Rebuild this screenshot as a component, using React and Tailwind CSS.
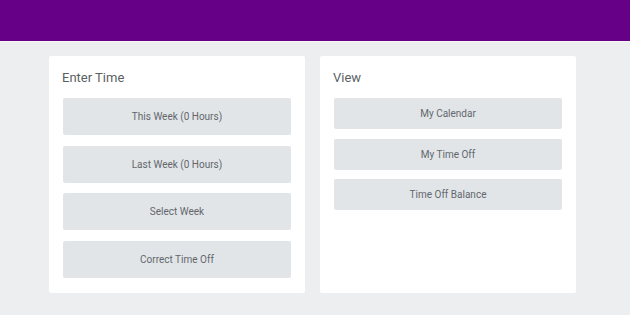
const enterTime = ['This Week (0 Hours)', 'Last Week (0 Hours)', 'Select Week', 'Correct Time Off'];
const view = ['My Calendar', 'My Time Off', 'Time Off Balance'];

function Card({ title, items, tall }) {
    return (
        <div className="w-[256px] h-[237px] bg-white rounded-[2px] px-[14px] pt-[13px]">
            <h2 className="text-[13px] leading-[17px] text-[#5b5f64] mb-[12px] -ml-px">{title}</h2>
            <div className={tall ? 'flex flex-col gap-[10.5px]' : 'flex flex-col gap-[9.5px]'}>
                {items.map((item) => (
                    <button
                        key={item}
                        className={`w-full ${tall ? 'h-[37px]' : 'h-[31px]'} bg-[#e1e5e8] rounded-[2px] text-[10px] text-[#63676c] flex items-center justify-center`}
                    >
                        {item}
                    </button>
                ))}
            </div>
        </div>
    );
}

export default function App() {
    return (
        <div className="min-h-[315px] w-full bg-[#edeeef]" style={{ fontFamily: 'Roboto, "Noto Sans", sans-serif' }}>
            {/* Barre violette */}
            <div className="h-[41px] bg-[#660087]" />
            <div className="h-px bg-[#f7f7f8]" />

            <div className="flex gap-[15px] pl-[49px] pt-[14px]">
                <Card title="Enter Time" items={enterTime} tall />
                <Card title="View" items={view} />
            </div>
        </div>
    );
}
